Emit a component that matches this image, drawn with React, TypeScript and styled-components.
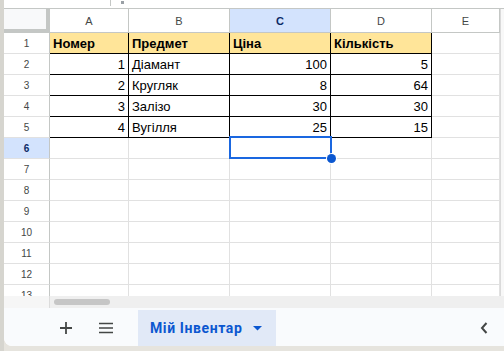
import React from 'react';
import styled, { createGlobalStyle, css } from 'styled-components';

const GlobalStyle = createGlobalStyle`
  html, body {
    margin: 0;
    padding: 0;
    background: #e4e2dc;
  }
  * {
    box-sizing: border-box;
  }
`;

const COLS = [
  { key: 'A', width: 79 },
  { key: 'B', width: 101 },
  { key: 'C', width: 101 },
  { key: 'D', width: 101 },
  { key: 'E', width: 68 },
];

type CellValue = { text: string; num?: boolean };

// table data, first row is the header row
const DATA: CellValue[][] = [
  [{ text: 'Номер' }, { text: 'Предмет' }, { text: 'Ціна' }, { text: 'Кількість' }],
  [{ text: '1', num: true }, { text: 'Діамант' }, { text: '100', num: true }, { text: '5', num: true }],
  [{ text: '2', num: true }, { text: 'Кругляк' }, { text: '8', num: true }, { text: '64', num: true }],
  [{ text: '3', num: true }, { text: 'Залізо' }, { text: '30', num: true }, { text: '30', num: true }],
  [{ text: '4', num: true }, { text: 'Вугілля' }, { text: '25', num: true }, { text: '15', num: true }],
];

const ROW_COUNT = 13;
const SELECTED_COL = 'C';
const SELECTED_ROW = 6;

function App() {
  const rows = Array.from({ length: ROW_COUNT }, (_, i) => i + 1);

  return (
    <>
      <GlobalStyle />
      <Frame>
        <Window>
          <FormulaStrip>
            <StripDivider />
            <StripCaret />
          </FormulaStrip>

          <SheetArea>
            <Sheet>
              <Corner />
              {COLS.map((c) => (
                <ColHeader key={c.key} $active={c.key === SELECTED_COL}>
                  {c.key}
                </ColHeader>
              ))}

              {rows.map((r) => (
                <React.Fragment key={r}>
                  <RowHeader $active={r === SELECTED_ROW}>{r}</RowHeader>
                  {COLS.map((c, ci) => {
                    const value = DATA[r - 1]?.[ci];
                    const inTable = r <= DATA.length && ci < 4;
                    const selected = r === SELECTED_ROW && c.key === SELECTED_COL;
                    return (
                      <Cell
                        key={c.key}
                        $table={inTable}
                        $head={r === 1 && inTable}
                        $num={!!value?.num}
                      >
                        {value?.text}
                        {selected && (
                          <Selection>
                            <FillHandle />
                          </Selection>
                        )}
                      </Cell>
                    );
                  })}
                </React.Fragment>
              ))}
            </Sheet>
            <VScroll />
          </SheetArea>

          <HScrollBand>
            <HScrollCorner />
            <HScrollTrack>
              <HScrollThumb />
            </HScrollTrack>
          </HScrollBand>

          <BottomBar>
            <IconButton $ml={48}>
              <svg width="14" height="14" viewBox="0 0 14 14">
                <path d="M7 1v12M1 7h12" stroke="#444746" strokeWidth="1.8" fill="none" />
              </svg>
            </IconButton>
            <IconButton $ml={12}>
              <svg width="16" height="12" viewBox="0 0 16 12">
                <path d="M1 1.5h14M1 6h14M1 10.5h14" stroke="#444746" strokeWidth="1.6" fill="none" />
              </svg>
            </IconButton>
            <SheetTab>
              <TabName>Мій Інвентар</TabName>
              <svg width="9" height="5" viewBox="0 0 9 5">
                <path d="M0 0h9L4.5 4.5z" fill="#0b57d0" />
              </svg>
            </SheetTab>
            <Chevron>
              <svg width="8" height="12" viewBox="0 0 8 12">
                <path d="M6.5 1L2 6l4.5 5" stroke="#444746" strokeWidth="2" fill="none" />
              </svg>
            </Chevron>
          </BottomBar>
        </Window>
      </Frame>
    </>
  );
}

const Frame = styled.div`
  width: 504px;
  height: 351px;
  display: flex;
  padding: 0 0 5px 4px;
  background: #e6e4de;
  box-shadow: inset 4px 0 0 #d6d5cf;
  overflow: hidden;
`;

const Window = styled.div`
  flex: 1;
  display: flex;
  flex-direction: column;
  background: #ffffff;
  border-bottom-left-radius: 8px;
  overflow: hidden;
  font-family: 'Liberation Sans', Arial, sans-serif;
`;

const FormulaStrip = styled.div`
  height: 9px;
  flex: none;
  display: flex;
  align-items: flex-start;
  border-bottom: 1px solid #c4c7c5;
  background: #ffffff;
`;

const StripDivider = styled.div`
  width: 1px;
  height: 6px;
  margin-left: 106px;
  background: #c4c7c5;
`;

const StripCaret = styled.div`
  width: 3px;
  height: 3px;
  margin: 1px 0 0 10px;
  background: #9aa0a6;
`;

const SheetArea = styled.div`
  height: 287px;
  flex: none;
  display: flex;
  overflow: hidden;
`;

const Sheet = styled.div`
  display: grid;
  grid-template-columns: 46px ${COLS.map((c) => `${c.width}px`).join(' ')};
  grid-template-rows: 24px;
  grid-auto-rows: 21px;
  align-content: start;
`;

const VScroll = styled.div`
  flex: 1;
  background: #f8f8f8;
  border-left: 1px solid #dadada;
`;

const Corner = styled.div`
  background: #f8f9fa;
  border-right: 4px solid #c4c7c5;
  border-bottom: 4px solid #c4c7c5;
`;

const headerText = css`
  display: flex;
  align-items: center;
  justify-content: center;
  color: #444746;
`;

const ColHeader = styled.div<{ $active?: boolean }>`
  ${headerText};
  font-size: 11px;
  border-right: 1px solid #c4c7c5;
  border-bottom: 1px solid #c4c7c5;
  background: ${(p) => (p.$active ? '#d3e3fd' : '#ffffff')};
  font-weight: ${(p) => (p.$active ? 700 : 400)};
  color: ${(p) => (p.$active ? '#0b2a66' : '#444746')};
`;

const RowHeader = styled.div<{ $active?: boolean }>`
  ${headerText};
  font-size: 10px;
  border-right: 1px solid #c4c7c5;
  border-bottom: 1px solid #e1e1e1;
  background: ${(p) => (p.$active ? '#d3e3fd' : '#ffffff')};
  font-weight: ${(p) => (p.$active ? 700 : 400)};
  color: ${(p) => (p.$active ? '#0b2a66' : '#444746')};
`;

const Cell = styled.div<{ $table?: boolean; $head?: boolean; $num?: boolean }>`
  position: relative;
  display: flex;
  align-items: center;
  justify-content: ${(p) => (p.$num ? 'flex-end' : 'flex-start')};
  padding: 1px 3px 0;
  font-size: 13px;
  color: #000000;
  white-space: nowrap;
  border-right: 1px solid ${(p) => (p.$table ? '#000000' : '#e1e1e1')};
  border-bottom: 1px solid ${(p) => (p.$table ? '#000000' : '#e1e1e1')};
  background: ${(p) => (p.$head ? '#ffe599' : '#ffffff')};
  font-weight: ${(p) => (p.$head ? 700 : 400)};
`;

const Selection = styled.div`
  position: absolute;
  z-index: 2;
  top: -2px;
  left: -1px;
  right: -2px;
  bottom: -1px;
  border: 2px solid #1a67e0;
  pointer-events: none;
`;

const FillHandle = styled.div`
  position: absolute;
  right: -6px;
  bottom: -6px;
  width: 9px;
  height: 9px;
  border-radius: 50%;
  background: #0b57d0;
  box-shadow: 0 0 0 1px #ffffff;
`;

const HScrollBand = styled.div`
  height: 12px;
  flex: none;
  display: flex;
  background: #efefef;
`;

const HScrollCorner = styled.div`
  width: 46px;
  background: #f6f6f6;
  border-right: 1px solid #dcdcdc;
`;

const HScrollTrack = styled.div`
  flex: 1;
  padding: 3px 0 0 4px;
`;

const HScrollThumb = styled.div`
  width: 56px;
  height: 6px;
  border-radius: 3px;
  background: #c6c6c6;
`;

const BottomBar = styled.div`
  flex: 1;
  display: flex;
  align-items: stretch;
  padding-top: 2px;
  background: #f9fbfd;
  border-bottom-left-radius: 8px;
`;

const IconButton = styled.div<{ $ml: number }>`
  width: 28px;
  display: flex;
  align-items: center;
  justify-content: center;
  margin-left: ${(p) => p.$ml}px;
`;

const SheetTab = styled.div`
  width: 138px;
  margin-left: 18px;
  display: flex;
  align-items: center;
  gap: 11px;
  padding-left: 12px;
  background: #e1e9f7;
`;

const TabName = styled.span`
  font-family: Roboto, 'Liberation Sans', sans-serif;
  font-size: 14px;
  font-weight: 700;
  color: #0b57d0;
  letter-spacing: 0.6px;
`;

const Chevron = styled.div`
  margin-left: auto;
  margin-right: 16px;
  display: flex;
  align-items: center;
`;

export default App;
